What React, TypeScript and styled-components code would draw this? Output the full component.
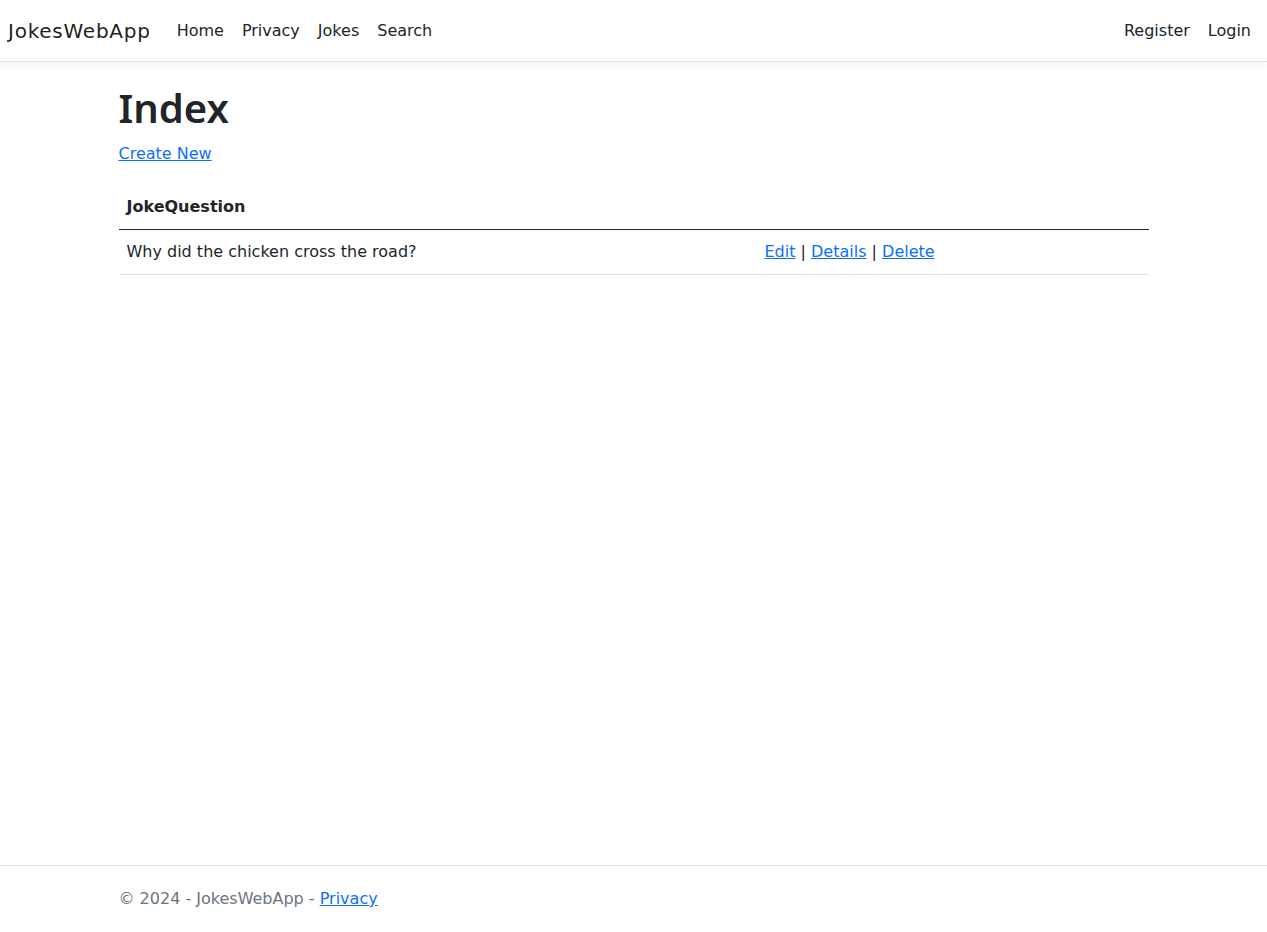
import React from "react";
import styled, { createGlobalStyle } from "styled-components";

const jokes = [{ id: 1, question: "Why did the chicken cross the road?" }];

const GlobalStyle = createGlobalStyle`
  html, body {
    margin: 0;
    padding: 0;
  }
  body {
    font-family: "DejaVu Sans", "Noto Sans", sans-serif;
    font-size: 16px;
    line-height: 1.5;
    color: #212529;
    background: #fff;
  }
`;

const Page = styled.div`
  min-height: 100vh;
  display: flex;
  flex-direction: column;
`;

const Navbar = styled.nav`
  height: 62px;
  box-sizing: border-box;
  display: flex;
  align-items: center;
  padding: 0 7px 0 8px;
  background: #fff;
  border-bottom: 1px solid #dee2e6;
  box-shadow: 0 0.25rem 0.75rem rgba(0, 0, 0, 0.05);
`;

const Brand = styled.a`
  font-size: 20px;
  letter-spacing: 0.75px;
  color: rgba(0, 0, 0, 0.9);
  text-decoration: none;
  margin-right: 17px;
`;

const NavList = styled.ul<{ $end?: boolean }>`
  display: flex;
  list-style: none;
  margin: 0;
  padding: 0;
  margin-left: ${(p) => (p.$end ? "auto" : "0")};
`;

const NavLink = styled.a`
  display: block;
  padding: 8px 9px;
  color: #212529;
  text-decoration: none;
  font-size: 16px;
`;

const Main = styled.main`
  flex: 1;
  width: 1030px;
  margin: 0 auto;
  padding-top: 22px;
`;

const Title = styled.h1`
  font-family: "Noto Sans", "DejaVu Sans", sans-serif;
  font-size: 40px;
  font-weight: 600;
  line-height: 1.2;
  margin: 0 0 10px;
`;

const Link = styled.a`
  color: #0d6efd;
  text-decoration: underline;
`;

const Para = styled.p`
  margin: 0 0 19px;
`;

const Table = styled.table`
  width: 100%;
  border-collapse: collapse;
  margin-bottom: 16px;
`;

const HeadCell = styled.th<{ $width?: number }>`
  text-align: left;
  font-weight: 700;
  padding: 10px 8px;
  line-height: 24px;
  border-bottom: 1px solid #212529;
  width: ${(p) => (p.$width ? `${p.$width}px` : "auto")};
`;

const Cell = styled.td`
  padding: 10px 8px;
  line-height: 24px;
  border-bottom: 1px solid #dee2e6;
`;

const Footer = styled.footer`
  border-top: 1px solid #dee2e6;
  height: 67px;
  box-sizing: border-box;
  line-height: 66px;
  color: #6c757d;
  white-space: nowrap;
`;

const FooterInner = styled.div`
  width: 1030px;
  margin: 0 auto;
`;

export default function App() {
  return (
    <Page>
      <GlobalStyle />
      <Navbar>
        <Brand href="#">JokesWebApp</Brand>
        <NavList>
          <li><NavLink href="#">Home</NavLink></li>
          <li><NavLink href="#">Privacy</NavLink></li>
          <li><NavLink href="#">Jokes</NavLink></li>
          <li><NavLink href="#">Search</NavLink></li>
        </NavList>
        <NavList $end>
          <li><NavLink href="#">Register</NavLink></li>
          <li><NavLink href="#">Login</NavLink></li>
        </NavList>
      </Navbar>
      <Main>
        <Title>Index</Title>
        <Para>
          <Link href="#">Create New</Link>
        </Para>
        <Table>
          <thead>
            <tr>
              <HeadCell $width={622}>JokeQuestion</HeadCell>
              <HeadCell />
            </tr>
          </thead>
          <tbody>
            {jokes.map((j) => (
              <tr key={j.id}>
                <Cell>{j.question}</Cell>
                <Cell>
                  <Link href="#">Edit</Link> | <Link href="#">Details</Link> |{" "}
                  <Link href="#">Delete</Link>
                </Cell>
              </tr>
            ))}
          </tbody>
        </Table>
      </Main>
      <Footer>
        <FooterInner>
          &copy; 2024 - JokesWebApp - <Link href="#">Privacy</Link>
        </FooterInner>
      </Footer>
    </Page>
  );
}
